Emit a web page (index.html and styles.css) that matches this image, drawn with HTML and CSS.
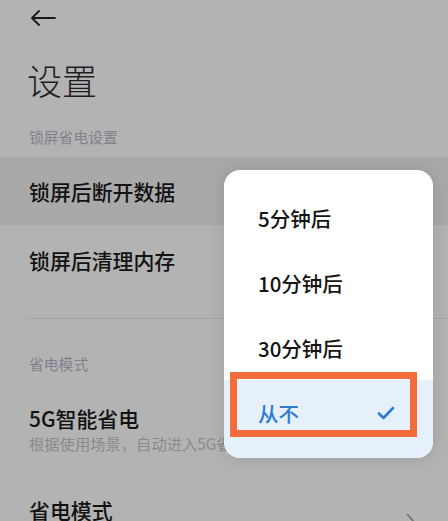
FILE: index.html
```html
<!DOCTYPE html>
<html lang="zh-CN">
<head>
<meta charset="utf-8">
<link rel="stylesheet" href="styles.css">
</head>
<body>
<div class="screen">
  <header class="topbar">
    <svg class="back" width="26" height="16" viewBox="0 0 26 16">
      <path d="M25 8H2M9 1L2 8l7 7" fill="none" stroke="#1a1a1a" stroke-width="1.8" stroke-linecap="round" stroke-linejoin="round"/>
    </svg>
  </header>
  <h1 class="title">设置</h1>
  <div class="section-label first">锁屏省电设置</div>
  <div class="row active"><span class="row-text">锁屏后断开数据</span></div>
  <div class="row"><span class="row-text">锁屏后清理内存</span></div>
  <div class="divider"></div>
  <div class="section-label second">省电模式</div>
  <div class="row-multi">
    <div class="row-text">5G智能省电</div>
    <div class="row-sub">根据使用场景，自动进入5G省电模式</div>
  </div>
  <div class="row-last">
    <span class="row-text">省电模式</span>
    <svg class="chev" width="10" height="18" viewBox="0 0 10 18">
      <path d="M1.5 1.5L8 9l-6.5 7.5" fill="none" stroke="#6f6f6f" stroke-width="1.6" stroke-linecap="round" stroke-linejoin="round"/>
    </svg>
  </div>

  <div class="popup">
    <div class="item">5分钟后</div>
    <div class="item">10分钟后</div>
    <div class="item">30分钟后</div>
    <div class="item selected">
      <span>从不</span>
      <svg class="check" width="18" height="14" viewBox="0 0 18 14">
        <path d="M2 7.5l4.5 4.5L16 2" fill="none" stroke="#2f7bd3" stroke-width="2.6" stroke-linecap="round" stroke-linejoin="round"/>
      </svg>
    </div>
  </div>
  <div class="annotation"></div>
</div>
</body>
</html>
```

FILE: styles.css
```css
html, body {
  margin: 0;
  padding: 0;
}
body {
  width: 448px;
  height: 521px;
  overflow: hidden;
  background: #b3b3b3;
  font-family: "Noto Sans CJK SC", "Noto Sans", sans-serif;
  color: #141414;
}
.screen {
  position: relative;
  width: 448px;
  height: 521px;
  overflow: hidden;
}
.topbar {
  height: 35px;
  display: flex;
  align-items: center;
  padding-left: 30px;
}
.back {
  display: block;
}
.title {
  margin: 20px 0 0 0;
  padding-left: 27px;
  font-size: 35px;
  line-height: 50px;
  font-weight: 300;
  color: #1e1e1e;
}
.section-label {
  padding-left: 29px;
  font-size: 14.8px;
  line-height: 20px;
  color: #7f828e;
}
.section-label.first {
  margin-top: 22px;
}
.section-label.second {
  margin-top: 35px;
}
.row {
  height: 68px;
  display: flex;
  align-items: center;
  padding-left: 29px;
}
.row.active {
  margin-top: 10px;
  background: #a9a9a9;
}
.row + .row {
  height: 70px;
}
.row-text {
  font-size: 20.9px;
  line-height: 28px;
  font-weight: 500;
  color: #121212;
}
.divider {
  margin: 23px 0 0 27px;
  height: 1px;
  background: #a4a4a4;
}
.row-multi {
  margin-top: 30px;
  padding-left: 29px;
}
.row-sub {
  font-size: 15.3px;
  line-height: 22px;
  color: #8a8a8a;
  white-space: nowrap;
}
.row-last {
  margin-top: 42px;
  padding-left: 29px;
  padding-right: 32px;
  display: flex;
  align-items: flex-start;
}
.chev {
  margin-left: auto;
  margin-top: 17px;
}
.popup {
  position: absolute;
  left: 224px;
  top: 170px;
  width: 209px;
  padding-top: 15px;
  background: #ffffff;
  border-radius: 16px;
  overflow: hidden;
  box-shadow: 0 0 18px rgba(0, 0, 0, 0.12);
}
.item {
  height: 65px;
  display: flex;
  align-items: center;
  padding-left: 34px;
  padding-right: 38px;
  font-size: 20.5px;
  font-weight: 500;
  color: #141414;
}
.item.selected {
  padding-bottom: 13px;
  background: #e6f0fb;
  color: #2f7bd3;
  justify-content: space-between;
}
.check {
  display: block;
}
.annotation {
  position: absolute;
  left: 230px;
  top: 372px;
  width: 173px;
  height: 51px;
  border: 7px solid #f36c3b;
}
```
